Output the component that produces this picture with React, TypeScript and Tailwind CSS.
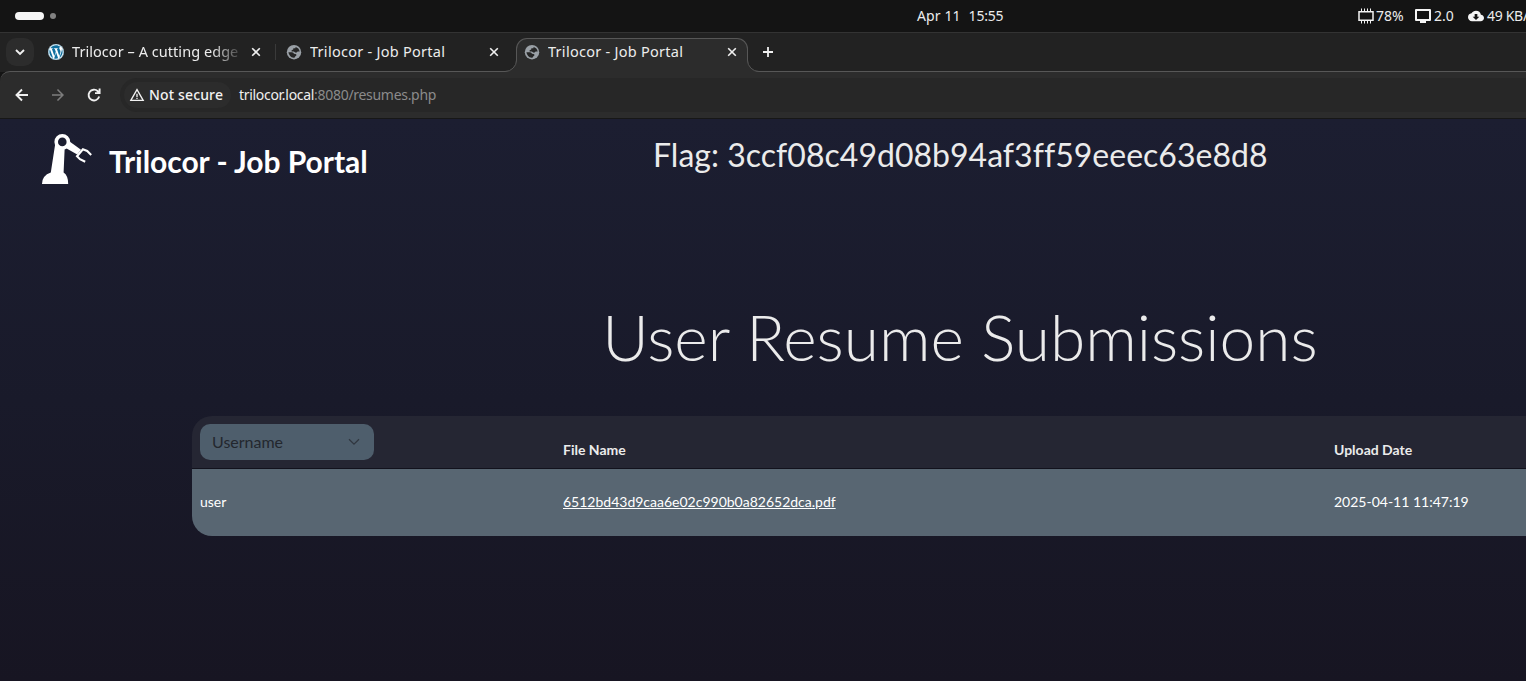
import React from "react";
import { FaWordpress } from "react-icons/fa";
import {
  MdArrowForward,
  MdWarningAmber,
  MdCloudDownload,
} from "react-icons/md";

function ChipIcon() {
  return (
    <svg className="shrink-0" width="16" height="16" viewBox="0 0 16 16" fill="none" stroke="#f2f2f2">
      <rect x="1" y="3.75" width="14" height="8.5" strokeWidth="1.5" />
      <path d="M3.5 0.5v3M6.5 0.5v3M9.5 0.5v3M12.5 0.5v3M3.5 12.5v3M6.5 12.5v3M9.5 12.5v3M12.5 12.5v3" />
    </svg>
  );
}

function MonitorIcon() {
  return (
    <svg className="shrink-0" width="16" height="14" viewBox="0 0 16 14">
      <path
        fill="#f5f5f5"
        fillRule="evenodd"
        d="M1 0h14q1 0 1 1v10q0 1-1 1h-4v2H5v-2H1q-1 0-1-1V1q0-1 1-1zM2 2v8h12V2z"
      />
    </svg>
  );
}

function GlobeIcon() {
  return (
    <svg className="shrink-0" width="17" height="17" viewBox="0 0 17 17">
      <circle cx="8" cy="8.2" r="7.2" fill="#9aa0a6" />
      <path
        fill="#262626"
        d="M2.4 8.2H6q1.6 0 2 1.5l1.6.2q1 .2.9 1.4L9.2 12.6Q9.1 13.8 7.6 13.8 3.2 13 2.4 8.2zM9.6 2.9Q13 3.8 13.7 7.6H11.6Q10.8 9 9.4 8.6L7.8 7.4H5.6V6.2L7.2 5.4 7.4 4.3H9.4z"
      />
    </svg>
  );
}

function LineIcon({ d, size, width, className }: { d: string; size: number; width: number; className?: string }) {
  return (
    <svg
      width={size}
      height={size}
      viewBox={`0 0 ${size} ${size}`}
      fill="none"
      stroke="#f0f0f0"
      strokeWidth={width}
      className={`shrink-0 ${className ?? ""}`}
    >
      <path d={d} />
    </svg>
  );
}

function CloseIcon({ className }: { className?: string }) {
  return <LineIcon size={12} width={1.6} d="M2.2 2.2 9.8 9.8M9.8 2.2 2.2 9.8" className={className} />;
}

function RobotArm() {
  return (
    <svg width="52" height="52" viewBox="0 0 52 52" className="block">
      <path fill="#fff" d="M14.5 8 28 10 L23.7 13.5 L22.6 38.5 Q27.2 41.5 27.2 50 H1 Q1 41.5 9.8 38.5 Z" />
      <path fill="#fff" d="M26.5 6 40 15.8 36.2 20.6 23 13z" />
      <circle cx="21.3" cy="7.9" r="6.1" fill="#1c1e31" stroke="#fff" strokeWidth="3.6" />
      <path
        fill="none"
        stroke="#fff"
        strokeWidth="2.1"
        d="M50.2 20.9 46.2 17 41.9 15.2 36 22.2 39 25.2 44.2 27.8"
      />
    </svg>
  );
}

function TabTitle({ children, className }: { children: React.ReactNode; className?: string }) {
  return (
    <span className={`overflow-hidden whitespace-nowrap text-[14.5px] leading-5 text-[#ececec] ${className ?? ""}`}>
      {children}
    </span>
  );
}

function TabStrip() {
  return (
    <div className="flex h-[39px] shrink-0 bg-[#222222]">
      <div className="ml-[6px] mt-[5px] flex size-7 shrink-0 items-center justify-center rounded-[10px] bg-[#2c2c2c]">
        <LineIcon size={12} width={1.9} d="M2 4 6 8 10 4" />
      </div>
      <div className="ml-[14px] flex h-[38px] w-[226px] shrink-0 items-center">
        <span className="flex size-4 rounded-full bg-white">
          <FaWordpress size={16} color="#0f6f9f" />
        </span>
        <TabTitle className="-mt-[2px] ml-2 w-[168px] [mask-image:linear-gradient(to_right,#000_140px,transparent_172px)]">
          <span className="tracking-[0.05px]">Trilocor – A cutting edge</span>
        </TabTitle>
        <CloseIcon className="ml-[10px]" />
      </div>
      <div className="ml-[1px] mt-[11px] h-4 w-px shrink-0 bg-[#3a3a3a]" />
      <div className="ml-[10px] flex h-[38px] w-[230px] shrink-0 items-center">
        <GlobeIcon />
        <TabTitle className="-mt-[2px] ml-[7px] w-[169px] tracking-[0.27px]">Trilocor - Job Portal</TabTitle>
        <CloseIcon className="ml-[9px]" />
      </div>
      <div className="relative z-10 mt-[5px] flex h-[34px] w-[232px] shrink-0 items-center rounded-t-[11px] border-x border-t border-[#575757] bg-[#2c2c2c] pl-[7px]">
        <svg className="absolute -left-[12px] bottom-0" width="12" height="12" viewBox="0 0 12 12">
          <path d="M0 11.5A11.5 11.5 0 0 0 11.5 0H12V12H0z" fill="#2c2c2c" />
          <path d="M0 11.5A11.5 11.5 0 0 0 11.5 0" fill="none" stroke="#575757" />
        </svg>
        <svg className="absolute -right-[12px] bottom-0" width="12" height="12" viewBox="0 0 12 12">
          <path d="M12 11.5A11.5 11.5 0 0 1 .5 0H0V12H12z" fill="#2c2c2c" />
          <path d="M12 11.5A11.5 11.5 0 0 1 .5 0" fill="none" stroke="#575757" />
        </svg>
        <div className="-mt-[7px] flex items-center">
          <GlobeIcon />
          <TabTitle className="-mt-[2px] ml-[7px] w-[169px] tracking-[0.27px]">Trilocor - Job Portal</TabTitle>
          <CloseIcon className="ml-[9px]" />
        </div>
      </div>
      <LineIcon size={16} width={1.8} d="M8 3v10M3 8h10" className="ml-3 mt-[11px]" />
    </div>
  );
}

export default function App() {
  return (
    <div className="flex h-[681px] w-full flex-col overflow-hidden bg-[#141414] font-['Noto_Sans',sans-serif]">
      <header className="flex h-[33px] shrink-0 items-center border-b border-[#333333] text-[14px] text-[#ececec]">
        <div className="flex w-[917px] shrink-0 items-center gap-[6px] pl-[15px]">
          <span className="h-2 w-[29px] rounded-full bg-[#f5f5f5]" />
          <span className="size-[6px] rounded-full bg-[#828282]" />
        </div>
        <div className="-mt-[2px] flex w-[441px] shrink-0 gap-2 text-[14px]">
          <span className="tracking-[0.1px]">Apr 11</span>
          <span className="tracking-[-0.2px]">15:55</span>
        </div>
        <ChipIcon />
        <span className="-mt-px ml-[2px] w-[39px] shrink-0">78%</span>
        <MonitorIcon />
        <span className="-mt-px ml-[3px] w-[34px] shrink-0">2.0</span>
        <MdCloudDownload size={16} color="#f5f5f5" className="shrink-0" />
        <span className="-mt-px ml-[3px] whitespace-nowrap tracking-[-0.3px]">49 KB/</span>
      </header>

      <TabStrip />

      <div className="-mt-px flex h-[48px] shrink-0 items-center rounded-tl-[10px] border-b border-t border-b-[#171717] border-t-[#575757] bg-[#2c2c2c]">
        <LineIcon size={18} width={1.9} d="M15 9H4M9 3.5 3.5 9 9 14.5" className="ml-[13px]" />
        <MdArrowForward size={18} color="#7d7d7d" className="ml-[18px] shrink-0" />
        <LineIcon
          size={18}
          width={1.9}
          d="M14.2 10.6A5.4 5.4 0 1 1 12.8 5.2L14.4 6.8M14.6 2.5V7.1H10"
          className="ml-[18px]"
        />
        <div className="ml-[17px] flex h-[34px] flex-1 items-center rounded-l-full bg-[#272727] pl-1">
          <div className="flex h-[26px] w-[107px] shrink-0 items-center rounded-full bg-[#2c2c2c] pl-[5px] text-[14px] font-medium text-[#f2f2f2]">
            <MdWarningAmber size={16} />
            <span className="-mt-[2px] ml-1 whitespace-nowrap tracking-[0.15px]">Not secure</span>
          </div>
          <div className="-mt-[2px] ml-2 whitespace-nowrap text-[14px] tracking-[-0.3px] text-[#8b8b8b]">
            <span className="text-[#efefef]">trilocor.local</span>:8080/resumes.php
          </div>
        </div>
      </div>

      <main className="flex flex-1 flex-col bg-linear-to-b from-[#1c1e31] via-[#191a2a] to-[#171522] font-['Lato',sans-serif] text-[#ebebeb]">
        <div className="flex h-[88px] shrink-0">
          <div className="flex w-[653px] shrink-0 pl-[41px] pt-[15px]">
            <RobotArm />
            <h2 className="ml-4 mt-1 whitespace-nowrap text-[30px] font-bold leading-[46px] tracking-[-0.04px] text-white">
              Trilocor - Job Portal
            </h2>
          </div>
          <p className="whitespace-nowrap pt-[13px] text-[32px] leading-[46px] tracking-[0.02px] [font-variant-ligatures:common-ligatures]">
            Flag: 3ccf08c49d08b94af3ff59eeec63e8d8
          </p>
        </div>
        <h1 className="ml-[192px] mt-[90px] w-[1536px] shrink-0 whitespace-nowrap text-center text-[64px] font-light leading-[80px]">
          User Resume Submissions
        </h1>
        <section className="ml-[192px] mt-[39px] flex h-[120px] shrink-0 flex-col overflow-hidden rounded-l-[20px] text-[14px]">
          <div className="flex h-[53px] shrink-0 border-b border-[#12121d] bg-[#252633] font-bold">
            <div className="w-[371px] shrink-0 pl-2 pt-2">
              <button className="flex h-9 w-[174px] items-center justify-between rounded-[10px] bg-[#4e5e6c] pl-3 pr-[14px] text-[16px] font-normal text-[#23272e]">
                Username
                <svg width="12" height="8" viewBox="0 0 12 8" fill="none" stroke="#303740" strokeWidth="1.3">
                  <path d="M1 1.2 6 6.2 11 1.2" />
                </svg>
              </button>
            </div>
            <span className="w-[771px] shrink-0 pt-[23px]">File Name</span>
            <span className="pt-[23px]">Upload Date</span>
          </div>
          <div className="flex h-[67px] shrink-0 items-center bg-[#586672] pb-[2px] text-white">
            <span className="w-[371px] shrink-0 pl-2">user</span>
            <span className="w-[771px] shrink-0">
              <a className="underline" href="#resume">6512bd43d9caa6e02c990b0a82652dca.pdf</a>
            </span>
            <span className="whitespace-nowrap">2025-04-11 11:47:19</span>
          </div>
        </section>
      </main>
    </div>
  );
}
